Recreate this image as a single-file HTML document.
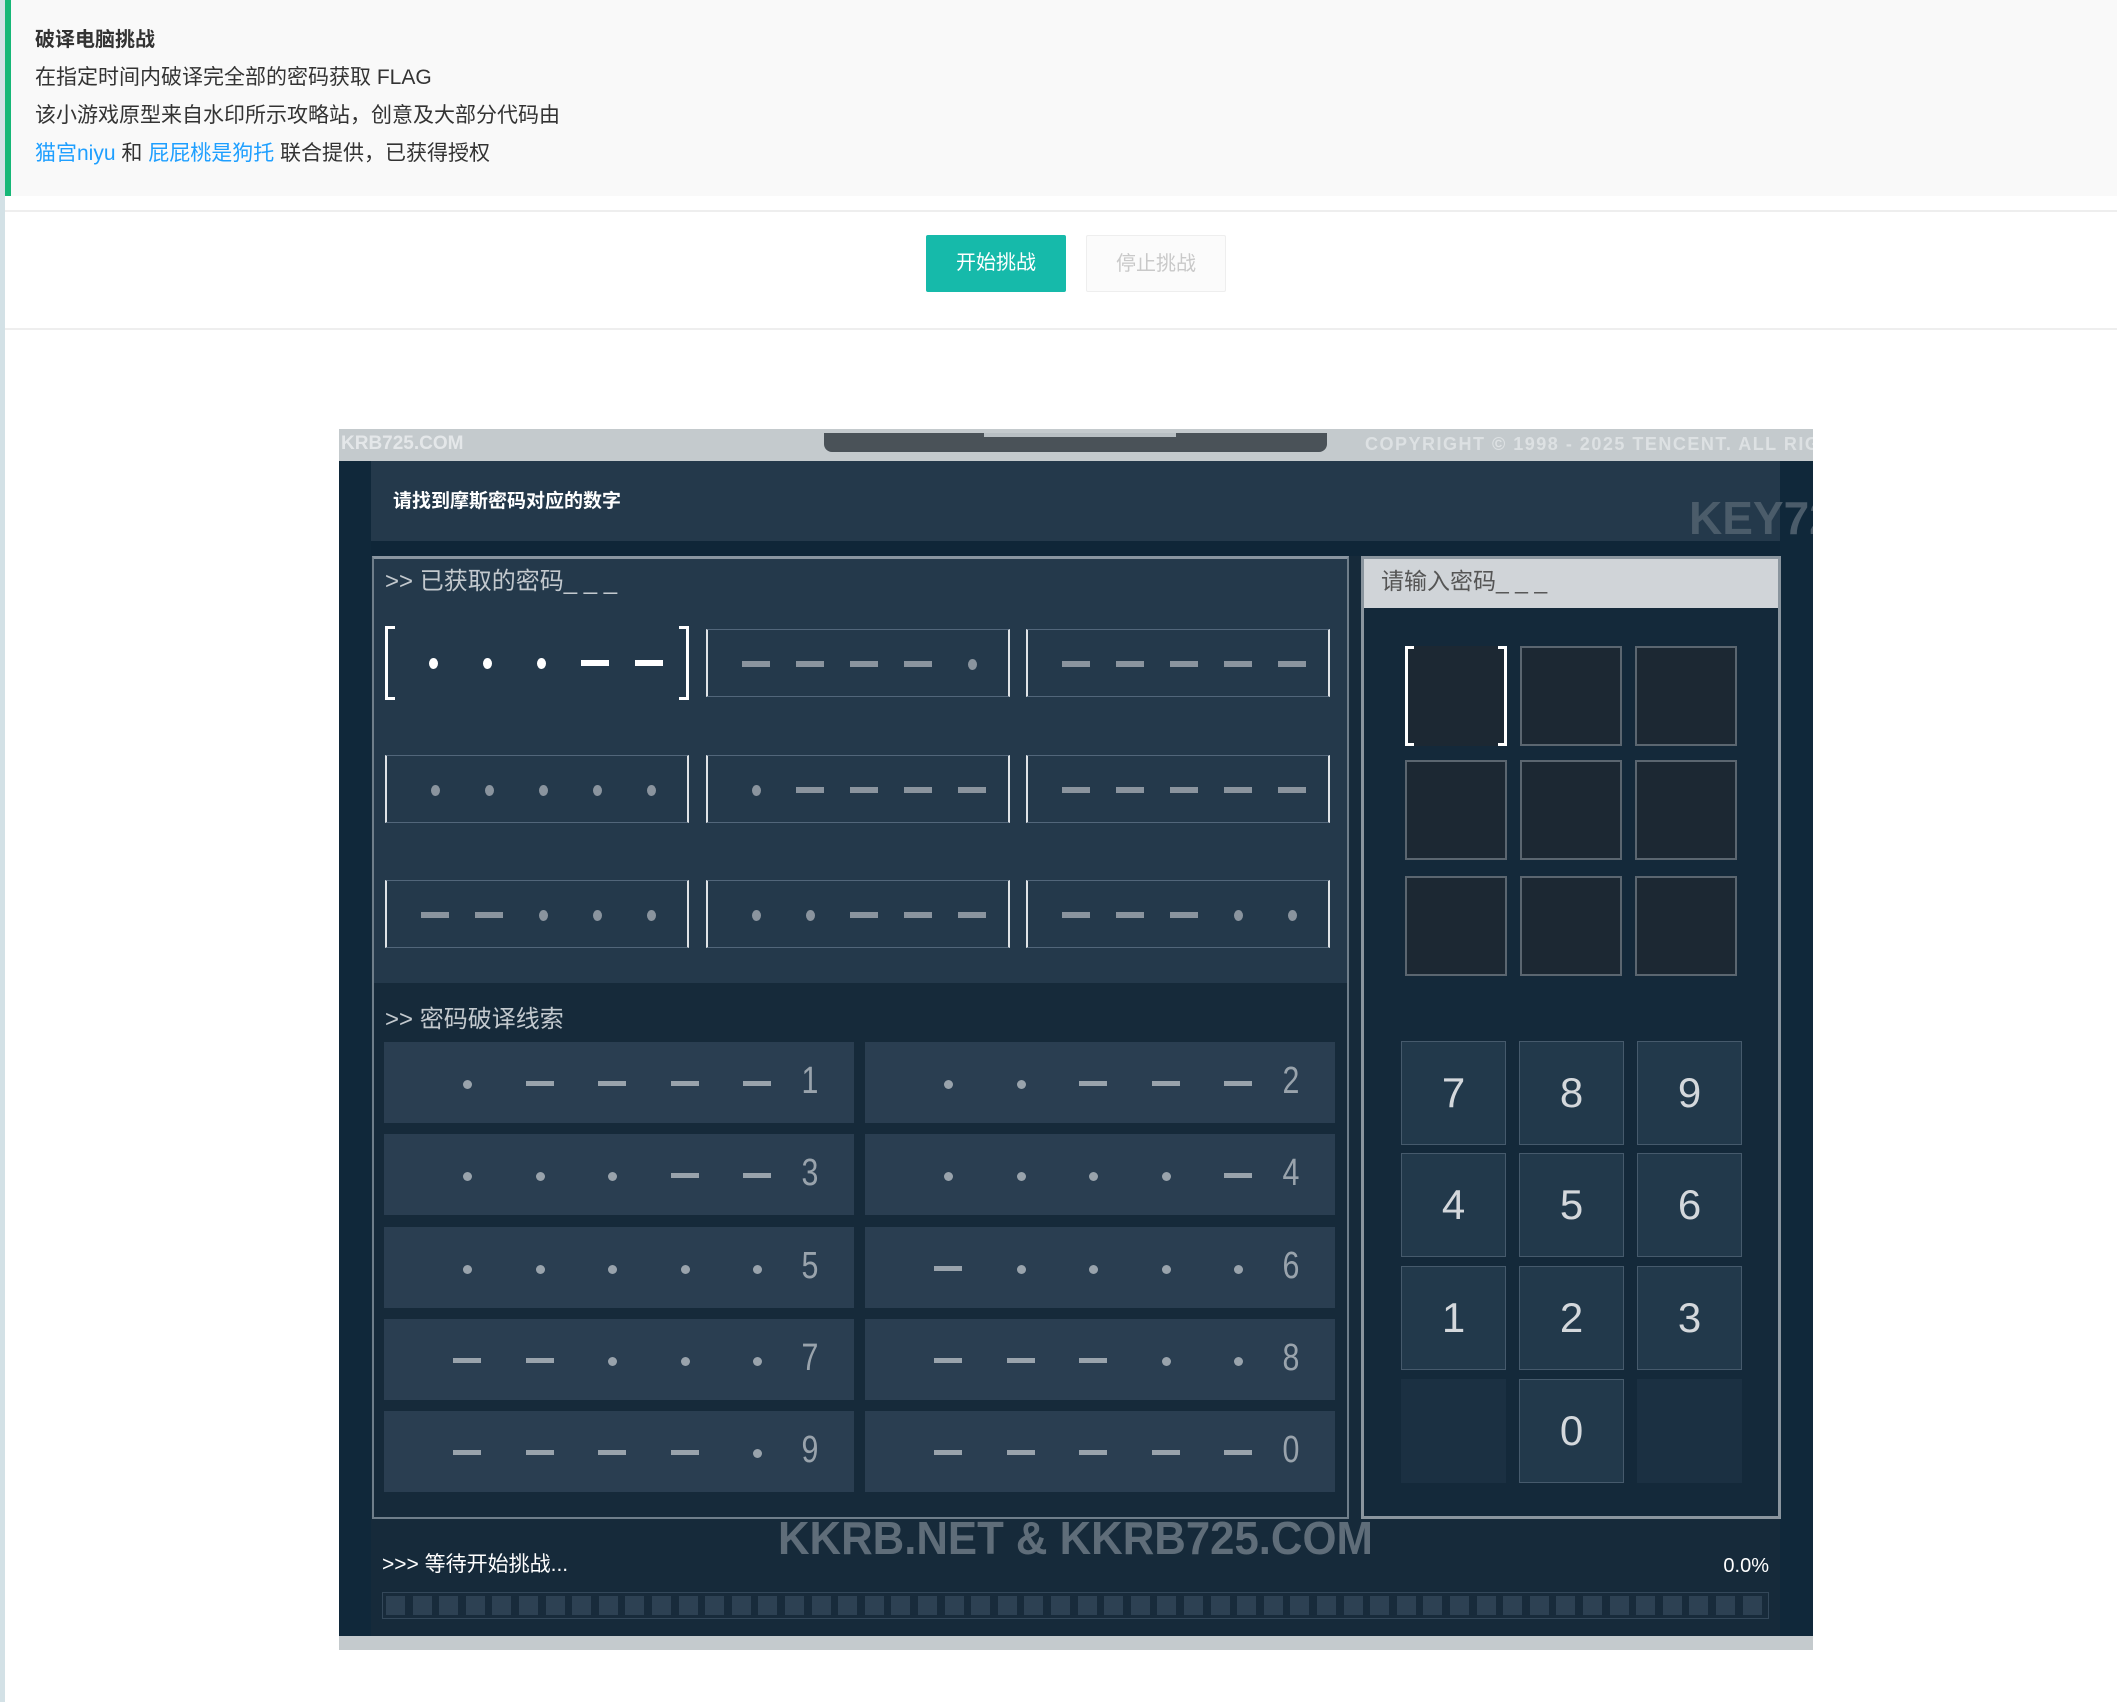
<!DOCTYPE html>
<html><head><meta charset="utf-8"><style>
*{margin:0;padding:0;box-sizing:border-box}
body{width:2117px;height:1702px;background:#fff;font-family:"Liberation Sans","Noto Sans CJK SC",sans-serif;position:relative;overflow:hidden}
.abs{position:absolute}
.lb{left:0;top:0;width:5px;height:1702px;background:#d3e1e6}
.notice{left:5px;top:0;width:2112px;height:196px;background:#f9f9f9;border-left:6px solid #16b777}
.notice p{position:absolute;left:24px;font-size:21px;color:#333;line-height:24px}
.notice a{color:#1e9fff}
.hr{left:5px;width:2112px;height:2px;background:#eee}
.btn{top:235px;height:57px;font-size:20px;line-height:57px;text-align:center;border-radius:2px}
.game{left:339px;top:429px;width:1474px;height:1221px;background:#162a3a;overflow:hidden}
.cell{position:absolute;border-top:1px solid #52667a;border-bottom:1px solid #52667a;border-left:2px solid #dfe3e6;border-right:2px solid #dfe3e6}
.d{position:absolute;width:9px;height:11px;border-radius:50%;margin:-5px 0 0 -4px}
.h{position:absolute;width:28px;height:6px;margin:-3px 0 0 -14px}
.clue{position:absolute;width:470px;height:81px;background:#2a3e51}
.clue .cd{position:absolute;top:38px;width:9px;height:9px;border-radius:50%;background:#99a3ac;margin-left:-4px}
.clue .ch{position:absolute;top:39px;width:28px;height:5px;background:#99a3ac;margin-left:-14px}
.clue .n{position:absolute;top:16px;width:40px;margin-left:-20px;text-align:center;font-size:38px;color:#99a3ac;transform:scaleX(0.8);line-height:46px}
.ib{position:absolute;width:102px;height:100px;background:#1c2833;border:2px solid #5b6670}
.key{position:absolute;width:105px;height:104px;background:rgba(70,95,115,0.3);border:1px solid #465a6c;color:#d4d8dc;font-size:42px;text-align:center;line-height:102px}
</style></head><body>
<div class="abs lb"></div>
<div class="abs notice">
<p style="top:28px;font-weight:bold;font-size:20px">破译电脑挑战</p>
<p style="top:66px">在指定时间内破译完全部的密码获取 FLAG</p>
<p style="top:104px">该小游戏原型来自水印所示攻略站，创意及大部分代码由</p>
<p style="top:142px"><a>猫宫niyu</a> 和 <a>屁屁桃是狗托</a> 联合提供，已获得授权</p>
</div>
<div class="abs hr" style="top:210px"></div>
<div class="abs btn" style="left:926px;width:140px;background:#16baaa;color:#fff">开始挑战</div>
<div class="abs btn" style="left:1086px;width:140px;background:#fbfbfb;border:1px solid #eee;color:#c9c9c9">停止挑战</div>
<div class="abs hr" style="top:328px"></div>

<div class="abs game">
 <div class="abs" style="left:0;top:0;width:1474px;height:32px;background:#c4cacd"></div>
 <div class="abs" style="left:2px;top:4px;font-size:19px;font-weight:bold;color:#e4e7e9">KRB725.COM</div>
 <div class="abs" style="left:1026px;top:5px;font-size:18px;font-weight:bold;color:#dde1e3;letter-spacing:1.5px;white-space:nowrap">COPYRIGHT © 1998 - 2025 TENCENT. ALL RIGHTS</div>
 <div class="abs" style="left:485px;top:4px;width:503px;height:19px;background:#4a5258;border-radius:0 0 8px 8px"></div>
 <div class="abs" style="left:645px;top:4px;width:192px;height:4px;background:#b8bfc3"></div>
 <div class="abs" style="left:0;top:32px;width:32px;height:1175px;background:#10283a"></div>
 <div class="abs" style="left:1441px;top:32px;width:33px;height:1175px;background:#10283a"></div>
 <div class="abs" style="left:32px;top:32px;width:1409px;height:80px;background:#24394b"></div>
 <div class="abs" style="left:54px;top:57px;font-size:19px;color:#fff;font-weight:bold">请找到摩斯密码对应的数字</div>
 <div class="abs" style="left:1350px;top:62px;font-size:46px;font-weight:bold;color:#4b5c6a;white-space:nowrap">KEY725</div>
 <div class="abs" style="left:32px;top:112px;width:1409px;height:15px;background:#0f2638"></div>

 <div class="abs" style="left:33px;top:127px;width:977px;height:963px;border:2px solid #6f7e8a;border-top:3px solid #8995a0"></div>
 <div class="abs" style="left:35px;top:130px;width:973px;height:424px;background:#24394b"></div>
 <div class="abs" style="left:46px;top:132px;font-size:24px;color:#c3c9ce">&gt;&gt; 已获取的密码_ _ _</div>

 <div class="abs" style="left:1022px;top:127px;width:420px;height:963px;border:3px solid #8a959e;background:#14293a"></div>
 <div class="abs" style="left:1025px;top:130px;width:414px;height:49px;background:#d0d4d8"></div>
 <div class="abs" style="left:1042px;top:133px;font-size:23px;color:#555">请输入密码_ _ _</div>

 <div class="abs" style="left:46px;top:570px;font-size:24px;color:#c3c9ce">&gt;&gt; 密码破译线索</div>

 <div class="abs" style="left:439px;top:1082px;font-size:46px;font-weight:bold;color:#5f6d79;white-space:nowrap;transform:scaleX(0.95);transform-origin:left">KKRB.NET &amp; KKRB725.COM</div>
 <div class="abs" style="left:43px;top:1119px;font-size:21px;color:#fff">&gt;&gt;&gt; 等待开始挑战...</div>
 <div class="abs" style="left:1380px;top:1126px;width:50px;font-size:20px;color:#fff;text-align:right">0.0%</div>
 <div class="abs" id="pb" style="left:43px;top:1163px;width:1387px;height:27px;border:1px solid #34485a;background:#182b3b"></div>
 <div class="abs" style="left:0;top:1207px;width:1474px;height:14px;background:#c4cacd"></div>
</div>

<script>
var g=document.querySelector('.game');
function add(h){g.insertAdjacentHTML('beforeend',h)}
var M={1:'.----',2:'..---',3:'...--',4:'....-',5:'.....',6:'-....',7:'--...',8:'---..',9:'----.',0:'-----'};
var cx=[46,367,687],cy=[200,326,451];
var codes=[[3,9,0],[5,1,0],[7,2,8]];
for(var r=0;r<3;r++)for(var c=0;c<3;c++){
 var x=cx[c],y=cy[r],s=M[codes[r][c]],first=(r==0&&c==0),col=first?'#fff':'#8a949e';
 var h='<div class="cell" style="left:'+x+'px;top:'+y+'px;width:304px;height:68px'+(first?';border:none':'')+'">';
 if(first){h+='<div class="abs" style="left:0;top:-3px;width:10px;height:74px;border:3px solid #fff;border-right:none"></div><div class="abs" style="right:0;top:-3px;width:10px;height:74px;border:3px solid #fff;border-left:none"></div>';}
 for(var i=0;i<5;i++){var px=48+i*54;h+='<div class="'+(s[i]=='.'?'d':'h')+'" style="left:'+px+'px;top:34px;background:'+col+'"></div>';}
 h+='</div>';add(h);
}
var ord=[1,2,3,4,5,6,7,8,9,0];
for(var k=0;k<10;k++){
 var c=k%2,r=Math.floor(k/2),x=c?526:45,y=613+r*92.3,s=M[ord[k]];
 var h='<div class="clue" style="left:'+x+'px;top:'+y+'px">';
 for(var i=0;i<5;i++){var px=83+i*72.5;h+='<div class="'+(s[i]=='.'?'cd':'ch')+'" style="left:'+px+'px"></div>';}
 h+='<div class="n" style="left:426px">'+ord[k]+'</div></div>';add(h);
}
var ix=[1066,1181,1296],iy=[217,331,447];
for(var r=0;r<3;r++)for(var c=0;c<3;c++){
 var first=r==0&&c==0;
 add('<div class="ib" style="left:'+ix[c]+'px;top:'+iy[r]+'px'+(first?';border-color:#1c2833':'')+'">'+(first?'<div class="abs" style="left:-2px;top:-2px;width:9px;height:100px;border:3px solid #fff;border-right:none"></div><div class="abs" style="right:-2px;top:-2px;width:9px;height:100px;border:3px solid #fff;border-left:none"></div>':'')+'</div>');
}
var kx=[1062,1180,1298],ky=[612,724,837,950];
var keys=[[7,8,9],[4,5,6],[1,2,3],['',0,'']];
for(var r=0;r<4;r++)for(var c=0;c<3;c++){
 var v=keys[r][c];
 add('<div class="key" style="left:'+kx[c]+'px;top:'+ky[r]+'px'+(v===''?';border:none;background:rgba(70,95,115,0.15)':'')+'">'+v+'</div>');
}
var pb=document.getElementById('pb'),h='';
for(var i=0;i<52;i++)h+='<div class="abs" style="left:'+(3+i*26.6)+'px;top:3px;width:19px;height:19px;background:#2d4153"></div>';
pb.innerHTML=h;
</script>
</body></html>
